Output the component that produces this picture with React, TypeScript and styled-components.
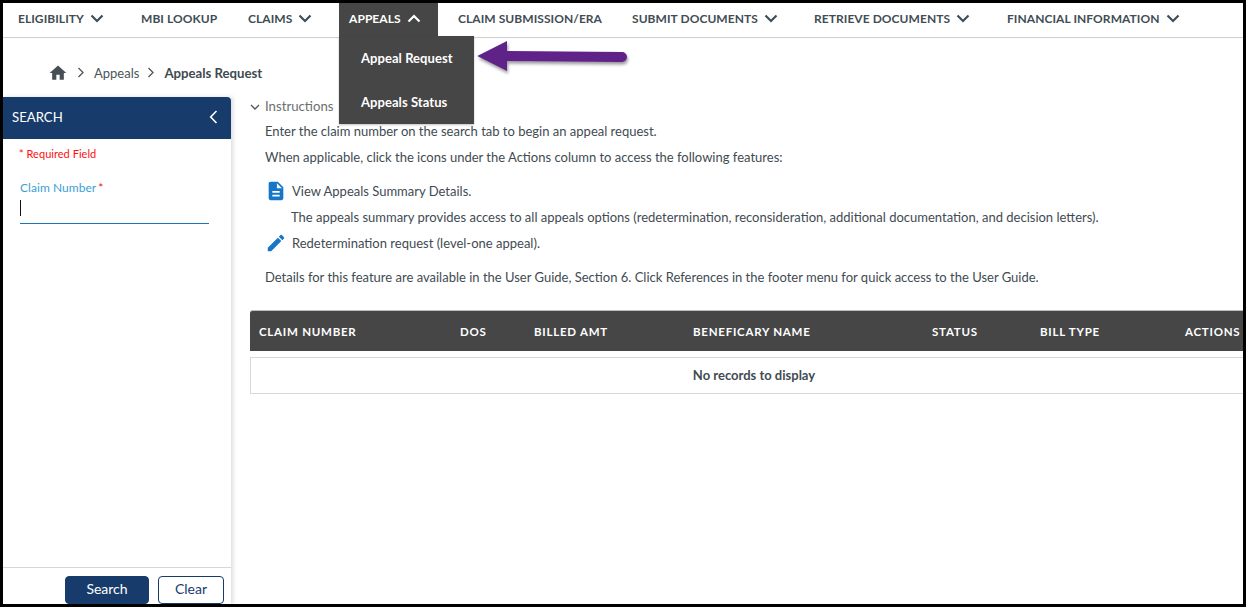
import React from "react";
import styled, { createGlobalStyle } from "styled-components";

const Global = createGlobalStyle`
  html, body { margin: 0; padding: 0; background: #fff; overflow: hidden; }
  body { font-family: Lato, "Liberation Sans", sans-serif; color: #3f4b52; }
  * { box-sizing: border-box; }
`;

const Frame = styled.div`
  position: relative;
  width: 1246px;
  height: 607px;
  border: 3px solid #000;
  border-bottom-width: 3.5px;
  display: flex;
  flex-direction: column;
  overflow: hidden;
  background: #fff;
`;

const Nav = styled.nav`
  flex: none;
  height: 35px;
  padding-left: 5px;
  border-bottom: 1px solid #cfcfcf;
  display: grid;
  grid-template-columns: 123px 107px 101px 99px 184px 182px 193px 1fr;
  position: relative;
  z-index: 3;
`;

const NavItem = styled.div<{ $active?: boolean; $inset?: number }>`
  position: relative;
  height: 34px;
  padding: 0 0 4px ${(p) => p.$inset ?? 10}px;
  display: flex;
  align-items: center;
  gap: 6px;
  font-size: 12px;
  font-weight: 700;
  letter-spacing: 0.06px;
  white-space: nowrap;
  color: ${(p) => (p.$active ? "#fff" : "#3f4d55")};
  background: ${(p) => (p.$active ? "#464646" : "transparent")};
`;

const Caret = styled.svg`
  width: 14px;
  height: 9px;
  flex: none;
`;

const Dropdown = styled.div`
  position: absolute;
  top: 33px;
  left: 0;
  width: 135px;
  height: 88px;
  background: #464646;
  box-shadow: 0 1px 2px rgba(0, 0, 0, 0.25);
`;

const DropdownItem = styled.div`
  height: 44px;
  padding-left: 22px;
  display: flex;
  align-items: center;
  color: #fff;
  font-size: 13px;
  font-weight: 700;
`;

const PointerArrow = styled.svg`
  position: absolute;
  left: 469px;
  top: 36px;
  width: 164px;
  height: 42px;
  z-index: 4;
  overflow: visible;
`;

const Crumbs = styled.div`
  flex: none;
  height: 59px;
  padding: 10px 0 0 45px;
  display: flex;
  align-items: center;
  font-size: 13px;
  color: #4a5559;
`;

const HomeIcon = styled.svg`
  width: 20px;
  height: 20px;
  fill: #454f54;
  margin-right: 7px;
`;

const CrumbSep = styled.svg<{ $lead?: number }>`
  width: 8px;
  height: 11px;
  margin: 0 9px 0 ${(p) => p.$lead ?? 2}px;
`;

const CrumbCurrent = styled.span`
  font-weight: 700;
  font-size: 13.2px;
  color: #3f4a50;
`;

const Body = styled.div`
  flex: 1;
  min-height: 0;
  display: flex;
`;

const Sidebar = styled.aside`
  flex: none;
  width: 228px;
  display: flex;
  flex-direction: column;
  box-shadow: 2px 0 4px rgba(0, 0, 0, 0.14);
  position: relative;
  z-index: 1;
`;

const SideHeader = styled.div`
  flex: none;
  height: 42px;
  margin-left: -3px;
  padding: 0 13px 2px 12px;
  display: flex;
  align-items: center;
  justify-content: space-between;
  background: #173c6b;
  color: #fff;
  font-size: 13.2px;
  border-top-right-radius: 4px;
`;

const SideForm = styled.div`
  flex: 1;
  padding: 8px 22px 0 17px;
`;

const Required = styled.div`
  margin-left: -1px;
  font-size: 11px;
  letter-spacing: 0.03px;
  line-height: 14px;
  color: #ff0f0f;
`;

const FieldLabel = styled.label`
  display: block;
  margin-top: 20px;
  font-size: 12px;
  letter-spacing: 0.05px;
  line-height: 14px;
  color: #3a9fd8;
`;

const Star = styled.span`
  color: #f01010;
  margin-left: 2px;
`;

const FieldInput = styled.div`
  height: 29px;
  border-bottom: 1px solid #1f74b4;
  padding-top: 5px;
`;

const CursorBar = styled.div`
  width: 1px;
  height: 16px;
  background: #111;
`;

const SideFooter = styled.div`
  flex: none;
  height: 37px;
  border-top: 1px solid #d6d6d6;
  padding: 8px 7px 0 0;
  display: flex;
  justify-content: flex-end;
  gap: 9px;
`;

const FootButton = styled.button<{ $primary?: boolean }>`
  height: 28px;
  width: ${(p) => (p.$primary ? 84 : 66)}px;
  border: 1px solid #173c6b;
  border-radius: 4px;
  background: ${(p) => (p.$primary ? "#173c6b" : "#fff")};
  color: ${(p) => (p.$primary ? "#fff" : "#173c6b")};
  font-family: inherit;
  font-size: 14px;
  padding: 0 0 3px;
`;

const Main = styled.main`
  flex: 1;
  min-width: 0;
  overflow: hidden;
  padding-left: 19px;
`;

const InstrTitle = styled.div`
  display: flex;
  align-items: center;
  gap: 5px;
  height: 18px;
  font-size: 13.2px;
  color: #6b6f72;
`;

const InstrCaret = styled.svg`
  width: 10px;
  height: 7px;
  margin-top: 2px;
`;

const Instr = styled.div`
  padding-left: 15px;
  margin-top: 3px;
  font-size: 13px;
  color: #3f4b52;
`;

const Line = styled.div<{ $gap?: number; $indent?: number }>`
  height: 26px;
  line-height: 26px;
  margin-top: ${(p) => p.$gap ?? 0}px;
  padding-left: ${(p) => p.$indent ?? 0}px;
  display: flex;
  align-items: center;
  white-space: nowrap;
`;

const LineIcon = styled.svg`
  width: 22px;
  height: 22px;
  fill: #1677c9;
  flex: none;
  margin: 0 5px 0 0;
`;

const Table = styled.div`
  width: 1008px;
  margin-top: 20px;
`;

const TableHead = styled.div`
  height: 41px;
  background: #464646;
  border-radius: 3px 3px 0 0;
  border-top: 1px solid #bdbdbd;
  padding-left: 9px;
  display: grid;
  grid-template-columns: 201px 74px 159px 239px 108px 145px 1fr;
  align-items: center;
  color: #fff;
  font-size: 11.5px;
  font-weight: 700;
  letter-spacing: 0.75px;
`;

const TableEmpty = styled.div`
  height: 37px;
  margin-top: 6px;
  padding-bottom: 2px;
  border: 1px solid #d8d8d8;
  display: flex;
  align-items: center;
  justify-content: center;
  font-size: 13px;
  font-weight: 700;
  color: #3f4b52;
`;

const Chevron = ({ up, color }: { up?: boolean; color: string }) => (
  <Caret viewBox="0 0 14 9">
    <path
      d={up ? "M1.5 7.5 7 2l5.5 5.5" : "M1.5 1.5 7 7l5.5-5.5"}
      fill="none"
      stroke={color}
      strokeWidth="2.2"
    />
  </Caret>
);

const Sep = ({ lead }: { lead?: number }) => (
  <CrumbSep $lead={lead} viewBox="0 0 8 11">
    <path d="M1.5 1 6 5.5 1.5 10" fill="none" stroke="#555" strokeWidth="1.3" />
  </CrumbSep>
);

const navItems: { label: string; caret?: boolean; inset?: number }[] = [
  { label: "ELIGIBILITY", caret: true },
  { label: "MBI LOOKUP" },
  { label: "CLAIMS", caret: true },
];
const navItemsAfter: { label: string; caret?: boolean; inset?: number }[] = [
  { label: "CLAIM SUBMISSION/ERA", inset: 20 },
  { label: "SUBMIT DOCUMENTS", caret: true },
  { label: "RETRIEVE DOCUMENTS", caret: true },
  { label: "FINANCIAL INFORMATION", caret: true },
];
const columns = ["CLAIM NUMBER", "DOS", "BILLED AMT", "BENEFICARY NAME", "STATUS", "BILL TYPE", "ACTIONS"];

export default function App() {
  const renderItem = (n: { label: string; caret?: boolean; inset?: number }) => (
    <NavItem key={n.label} $inset={n.inset}>
      {n.label}
      {n.caret && <Chevron color="#3f4d55" />}
    </NavItem>
  );
  return (
    <Frame>
      <Global />
      <Nav>
        {navItems.map(renderItem)}
        <NavItem $active>
          APPEALS
          <Chevron up color="#fff" />
          <Dropdown>
            <DropdownItem>Appeal Request</DropdownItem>
            <DropdownItem>Appeals Status</DropdownItem>
          </Dropdown>
        </NavItem>
        {navItemsAfter.map(renderItem)}
      </Nav>
      <PointerArrow viewBox="0 0 164 42">
        <defs>
          <filter id="arrowShadow" x="-10%" y="-30%" width="120%" height="170%">
            <feDropShadow dx="1" dy="2.5" stdDeviation="1.6" floodColor="#000" floodOpacity="0.4" />
          </filter>
        </defs>
        <path d="M5.300 17 35 2v10l115 1a5 5 0 0 1 0 10L35 22v10Z" fill="#5f2088" filter="url(#arrowShadow)" />
      </PointerArrow>
      <Crumbs>
        <HomeIcon viewBox="0 0 24 24">
          <path d="M10 20v-6h4v6h5v-8h3L12 3 2 12h3v8z" />
        </HomeIcon>
        <Sep />
        <span>Appeals</span>
        <Sep lead={8} />
        <CrumbCurrent>Appeals Request</CrumbCurrent>
      </Crumbs>
      <Body>
        <Sidebar>
          <SideHeader>
            SEARCH
            <svg width="9" height="14" viewBox="0 0 9 14">
              <path d="M7.5 1 1.7 7l5.800 6" fill="none" stroke="#fff" strokeWidth="1.6" />
            </svg>
          </SideHeader>
          <SideForm>
            <Required>* Required Field</Required>
            <FieldLabel>
              Claim Number<Star>*</Star>
            </FieldLabel>
            <FieldInput>
              <CursorBar />
            </FieldInput>
          </SideForm>
          <SideFooter>
            <FootButton $primary>Search</FootButton>
            <FootButton>Clear</FootButton>
          </SideFooter>
        </Sidebar>
        <Main>
          <InstrTitle>
            <InstrCaret viewBox="0 0 10 7">
              <path d="M1 1l4 4 4-4" fill="none" stroke="#555" strokeWidth="1.3" />
            </InstrCaret>
            Instructions
          </InstrTitle>
          <Instr>
            <Line>Enter the claim number on the search tab to begin an appeal request.</Line>
            <Line>When applicable, click the icons under the Actions column to access the following features:</Line>
            <Line $gap={8}>
              <LineIcon viewBox="0 0 24 24">
                <path d="M14 2H6c-1.100 0-2 .9-2 2v16c0 1.100.9 2 2 2h12c1.100 0 2-.9 2-2V8l-6-6zm2 16H8v-2h8v2zm0-4H8v-2h8v2zm-3-5V3.500L18.500 9H13z" />
              </LineIcon>
              View Appeals Summary Details.
            </Line>
            <Line $indent={26}>
              The appeals summary provides access to all appeals options (redetermination, reconsideration, additional
              documentation, and decision letters).
            </Line>
            <Line>
              <LineIcon viewBox="0 0 24 24">
                <path d="M3 17.250V21h3.750L17.810 9.940l-3.750-3.750L3 17.250zM20.710 7.040a1 1 0 0 0 0-1.410l-2.340-2.340a1 1 0 0 0-1.410 0l-1.830 1.830 3.750 3.750 1.830-1.830z" />
              </LineIcon>
              Redetermination request (level-one appeal).
            </Line>
            <Line $gap={8}>
              Details for this feature are available in the User Guide, Section 6. Click References in the footer menu
              for quick access to the User Guide.
            </Line>
          </Instr>
          <Table>
            <TableHead>
              {columns.map((c) => (
                <span key={c}>{c}</span>
              ))}
            </TableHead>
            <TableEmpty>No records to display</TableEmpty>
          </Table>
        </Main>
      </Body>
    </Frame>
  );
}
